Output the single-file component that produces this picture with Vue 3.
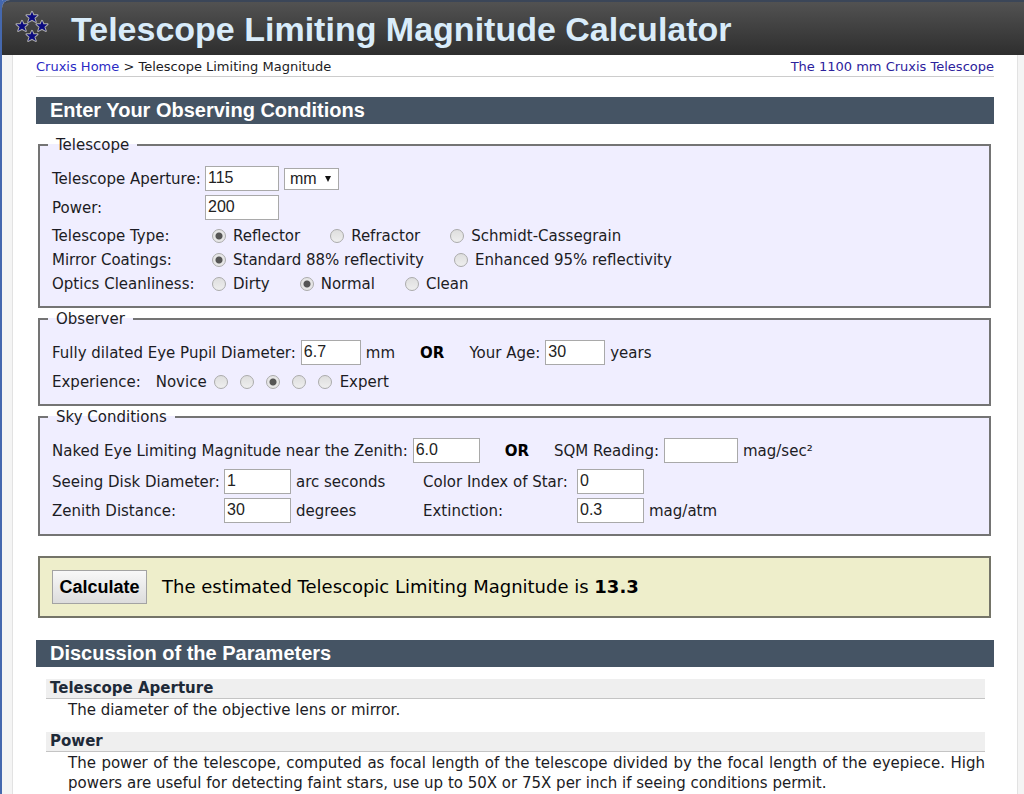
<script setup>
import { reactive } from 'vue'

const form = reactive({
  aperture: '115',
  unit: 'mm',
  power: '200',
  type: 'Reflector',
  coating: 'Standard 88% reflectivity',
  clean: 'Normal',
  pupil: '6.7',
  age: '30',
  experience: 3,
  nelm: '6.0',
  sqm: '',
  seeing: '1',
  colorIndex: '0',
  zenith: '30',
  extinction: '0.3'
})

const choices = [
  { key: 'type', label: 'Telescope Type:', options: ['Reflector', 'Refractor', 'Schmidt-Cassegrain'] },
  { key: 'coating', label: 'Mirror Coatings:', options: ['Standard 88% reflectivity', 'Enhanced 95% reflectivity'] },
  { key: 'clean', label: 'Optics Cleanliness:', options: ['Dirty', 'Normal', 'Clean'] }
]

const parameters = [
  { name: 'Telescope Aperture', text: 'The diameter of the objective lens or mirror.' },
  {
    name: 'Power',
    text: 'The power of the telescope, computed as focal length of the telescope divided by the focal length of the eyepiece. High powers are useful for detecting faint stars, use up to 50X or 75X per inch if seeing conditions permit.'
  }
]

const stars = [[17, 7], [7, 16], [27, 16], [17, 26]]
</script>

<template>
  <div class="site">
    <header class="banner">
      <svg class="logo" viewBox="0 0 34 34" aria-hidden="true">
        <g v-for="(s, i) in stars" :key="i" :transform="`translate(${s[0]} ${s[1]})`">
          <path class="star" d="M0-5.2 1.5-1.8H5.5L2.4 1 3.8 5 0 2.8-3.8 5-2.4 1-5.5-1.8H-1.5Z" />
        </g>
      </svg>
      <h1>Telescope Limiting Magnitude Calculator</h1>
    </header>

    <main class="page">
      <nav class="crumbs">
        <span><a href="#home">Cruxis Home</a> &gt; Telescope Limiting Magnitude</span>
        <a class="visited" href="#telescope">The 1100 mm Cruxis Telescope</a>
      </nav>

      <h2>Enter Your Observing Conditions</h2>
      <form @submit.prevent>
        <fieldset>
          <legend>Telescope</legend>
          <div class="row">
            <label class="name" for="aperture">Telescope Aperture:</label>
            <input id="aperture" v-model="form.aperture" class="wide" type="text">
            <span class="picker">
              <select v-model="form.unit" aria-label="Aperture unit">
                <option>mm</option>
                <option>inch</option>
              </select>
            </span>
          </div>
          <div class="row">
            <label class="name" for="power">Power:</label>
            <input id="power" v-model="form.power" class="wide" type="text">
          </div>
          <div class="choices">
            <div v-for="c in choices" :key="c.key" class="choice" role="radiogroup" :aria-label="c.label">
              <span class="name">{{ c.label }}</span>
              <label v-for="o in c.options" :key="o" class="option">
                <input v-model="form[c.key]" type="radio" :name="c.key" :value="o">{{ o }}
              </label>
            </div>
          </div>
        </fieldset>

        <fieldset>
          <legend>Observer</legend>
          <div class="row">
            <label for="pupil">Fully dilated Eye Pupil Diameter:</label>
            <input id="pupil" v-model="form.pupil" class="small" type="text">
            <span>mm</span>
            <b class="or">OR</b>
            <label for="age">Your Age:</label>
            <input id="age" v-model="form.age" class="small" type="text">
            <span>years</span>
          </div>
          <div class="row" role="radiogroup" aria-label="Experience">
            <span class="lead">Experience:</span>
            <span>Novice</span>
            <span class="scale">
              <input v-for="n in 5" :key="n" v-model="form.experience" type="radio" name="experience" :value="n" :aria-label="`Level ${n}`">
            </span>
            <span>Expert</span>
          </div>
        </fieldset>

        <fieldset>
          <legend>Sky Conditions</legend>
          <div class="row">
            <label for="nelm">Naked Eye Limiting Magnitude near the Zenith:</label>
            <input id="nelm" v-model="form.nelm" class="medium" type="text">
            <b class="or">OR</b>
            <label for="sqm">SQM Reading:</label>
            <input id="sqm" v-model="form.sqm" class="wide" type="text">
            <span>mag/sec²</span>
          </div>
          <div class="sky">
            <label for="seeing">Seeing Disk Diameter:</label>
            <input id="seeing" v-model="form.seeing" class="medium" type="text">
            <span class="unit">arc seconds</span>
            <label for="color">Color Index of Star:</label>
            <input id="color" v-model="form.colorIndex" class="medium" type="text">
            <span class="unit"></span>
            <label for="zenith">Zenith Distance:</label>
            <input id="zenith" v-model="form.zenith" class="medium" type="text">
            <span class="unit">degrees</span>
            <label for="extinction">Extinction:</label>
            <input id="extinction" v-model="form.extinction" class="medium" type="text">
            <span class="unit">mag/atm</span>
          </div>
        </fieldset>

        <div class="result">
          <button type="submit">Calculate</button>
          <output>The estimated Telescopic Limiting Magnitude is <b>13.3</b></output>
        </div>
      </form>

      <h2>Discussion of the Parameters</h2>
      <dl>
        <template v-for="p in parameters" :key="p.name">
          <dt>{{ p.name }}</dt>
          <dd>{{ p.text }}</dd>
        </template>
      </dl>
    </main>
  </div>
</template>

<style>
html {
  background: #f4f4f4;
  overflow: hidden;
}
</style>

<style scoped>
.site {
  min-height: 100vh;
  display: flex;
  flex-direction: column;
  border-left: 2px solid #4568ae;
  background: #f4f4f4;
  color: #1c1c24;
  font: 15px/20px Verdana, "DejaVu Sans", sans-serif;
}
.banner {
  height: 55px;
  box-sizing: border-box;
  display: flex;
  align-items: center;
  gap: 22px;
  padding-left: 13px;
  border-top: 2px solid #3b4658;
  border-top-left-radius: 8px;
  background: linear-gradient(#525252, #2e2e2e);
  box-shadow: -2px -2px 0 #4568ae;
}
.logo {
  width: 34px;
  height: 34px;
  margin-bottom: 4px;
}
.star {
  fill: #0a0a80;
  stroke: #b0b0b0;
  stroke-width: 2;
  stroke-linejoin: round;
  paint-order: stroke;
}
h1 {
  margin: 0;
  color: #d9ecfa;
  font: bold 34px/50px "Liberation Sans", Arial, sans-serif;
  white-space: nowrap;
}
.page {
  flex: 1;
  margin: 0 6px 0 10px;
  padding: 0 23px;
  border: solid #e2e2e2;
  border-width: 0 1px;
  background: #fff;
}
.crumbs {
  display: flex;
  justify-content: space-between;
  padding-top: 2px;
  border-bottom: 1px solid #ccc;
  font-size: 13px;
  line-height: 19px;
}
a {
  color: #2a2ac4;
  text-decoration: none;
}
.visited {
  color: #2c229c;
}
h2 {
  margin: 20px 0 12px;
  padding-left: 14px;
  background: #455464;
  color: #fff;
  font: bold 20px/27px "Liberation Sans", Arial, sans-serif;
}
fieldset {
  margin: 0 3px 2px 2px;
  padding: 10px 12px 8px;
  border: 2px solid #747474;
  background: #f0eeff;
}
legend {
  padding: 0 8px;
  margin-left: -4px;
  line-height: 18px;
}
.row {
  display: flex;
  align-items: center;
  height: 29px;
  gap: 5px;
}
.name {
  width: 153px;
  flex: none;
}
.row > .name {
  width: 148px;
  white-space: nowrap;
}
input[type="text"] {
  box-sizing: border-box;
  height: 25px;
  margin: 0;
  padding: 0 2px 2px;
  border: 1px solid #a9a9a9;
  border-radius: 0;
  background: #fff;
  color: #222;
  font: 16px/20px "Liberation Sans", Arial, sans-serif;
}
.wide { width: 74px; }
.medium { width: 67px; }
.small { width: 60px; }
.picker {
  position: relative;
}
.picker::after {
  content: "";
  position: absolute;
  right: 8px;
  top: 8px;
  border: solid transparent;
  border-width: 6px 3px 0;
  border-top-color: #111;
  pointer-events: none;
}
select {
  appearance: none;
  display: block;
  width: 55px;
  height: 22px;
  margin: 0;
  padding: 0 5px;
  border: 1px solid #a9a9a9;
  border-radius: 0;
  background: #fff;
  color: #222;
  font: 16px/18px "Liberation Sans", Arial, sans-serif;
}
.choices {
  margin: 2px 0;
}
.choice {
  display: flex;
  align-items: center;
  height: 24px;
}
.option {
  display: flex;
  align-items: center;
  gap: 7px;
  margin: 0 23px 0 7px;
}
input[type="radio"] {
  appearance: none;
  box-sizing: border-box;
  width: 14px;
  height: 14px;
  margin: 0;
  border: 1px solid #ababab;
  border-radius: 50%;
  background: linear-gradient(#dedede, #eeeeee);
}
input[type="radio"]:checked {
  background: radial-gradient(circle, #555 3px, #e6e6e6 4px);
}
.or {
  margin: 0 20px;
  color: #000;
}
.lead {
  margin-right: 10px;
}
.scale {
  display: flex;
  gap: 12px;
  margin: 0 3px 0 2px;
}
.sky {
  display: grid;
  grid-template-columns: 172px 67px 132px 154px 67px auto;
  grid-auto-rows: 29px;
  align-items: center;
  margin: 2px 0 1px;
}
.unit {
  padding-left: 5px;
}
.result {
  display: flex;
  align-items: center;
  gap: 15px;
  margin: 20px 3px 22px 2px;
  padding: 12px;
  border: 2px solid #747468;
  background: #eeeecb;
  color: #000;
  font-size: 18px;
}
button {
  width: 95px;
  height: 34px;
  padding: 0;
  border: 1px solid #a3a3a3;
  border-radius: 0;
  background: linear-gradient(#f8f8f8, #dcdcdc);
  color: #000;
  font: bold 18px/24px "Liberation Sans", Arial, sans-serif;
}
dl {
  margin: 0 9px 0 10px;
}
dt {
  padding-left: 4px;
  border-bottom: 1px solid #c4c4c4;
  background: #efefef;
  color: #1e2a38;
  font-weight: bold;
  line-height: 19px;
}
dd {
  margin: 1px 0 12px 22px;
  text-align: justify;
}
</style>
